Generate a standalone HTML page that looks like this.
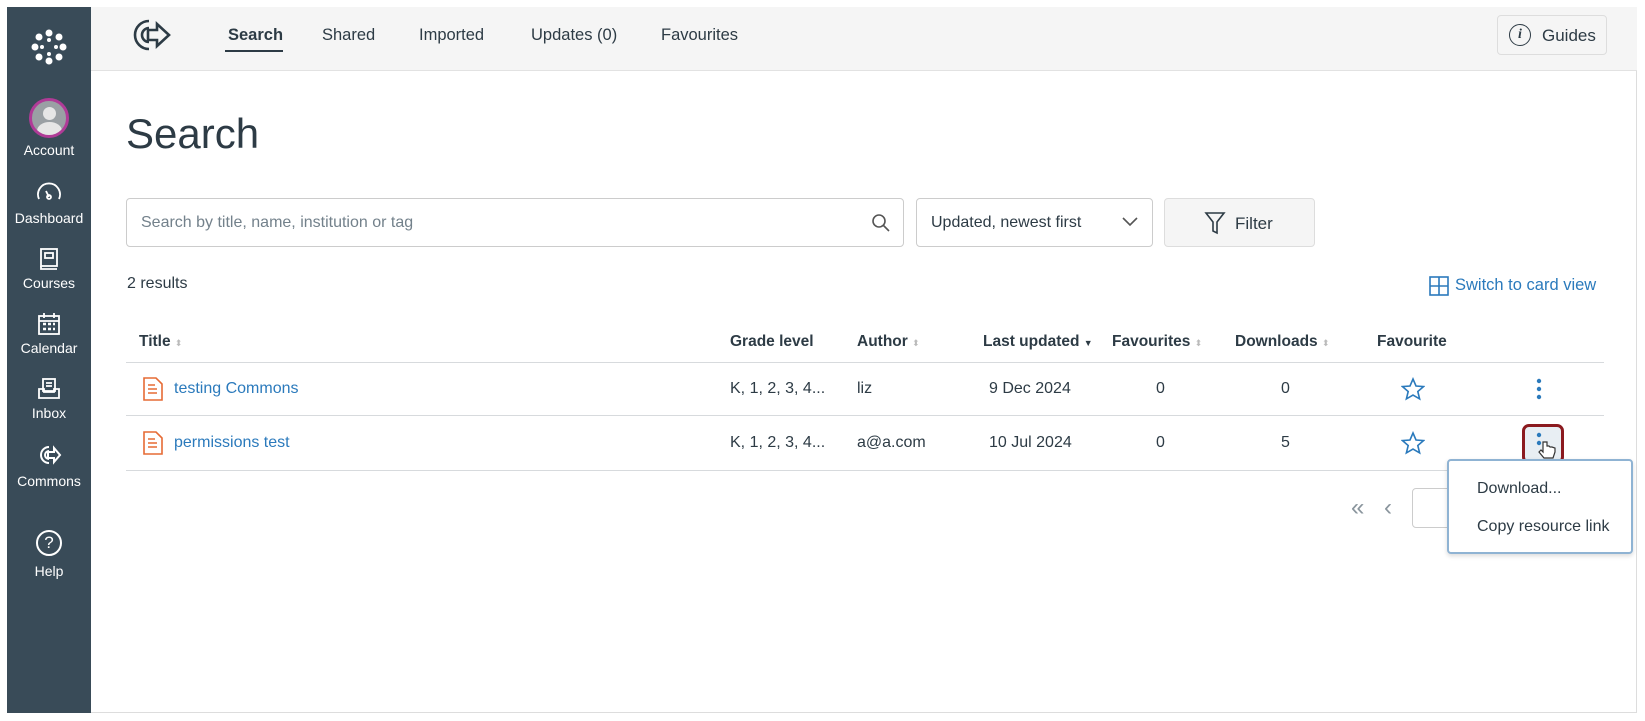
<!DOCTYPE html>
<html><head><meta charset="utf-8"><style>
*{box-sizing:border-box;margin:0;padding:0}
body{width:1645px;height:721px;background:#fff;font-family:"Liberation Sans",sans-serif;position:relative;overflow:hidden;color:#2d3b45}
.frame{position:absolute;left:7px;top:7px;width:1630px;height:706px;border:1px solid #ddd;background:#fff;overflow:hidden}
.side{position:absolute;left:7px;top:7px;width:84px;height:706px;background:#394b58}
.si{position:absolute;left:0;width:84px;text-align:center;color:#fff;font-size:14px}
.top{position:absolute;left:91px;top:7px;width:1546px;height:64px;background:#f5f5f5;border-bottom:1px solid #e2e2e2}
.tab{position:absolute;top:19px;font-size:16.5px;color:#2d3b45}
.abs{position:absolute}
.hd{position:absolute;top:333px;font-size:15.5px;font-weight:bold;color:#2d3b45}
.cell{position:absolute;font-size:16px;color:#2d3b45}
.line{position:absolute;left:126px;width:1478px;height:1px;background:#d7dadd}
.link{color:#2b7abc}
.sort{color:#bbb;font-size:9px;font-weight:normal}
</style></head><body>
<div class="frame"></div>
<div class="side">
 <svg class="abs" style="left:22px;top:20px" width="40" height="40" viewBox="0 0 40 40" fill="#fff"><circle cx="20" cy="6" r="3.5"/><circle cx="20" cy="34" r="3.5"/><circle cx="6" cy="20" r="3.5"/><circle cx="34" cy="20" r="3.5"/><circle cx="10" cy="10" r="3.5"/><circle cx="30" cy="10" r="3.5"/><circle cx="10" cy="30" r="3.5"/><circle cx="30" cy="30" r="3.5"/><circle cx="20" cy="13" r="2"/><circle cx="20" cy="27" r="2"/><circle cx="13" cy="20" r="2"/><circle cx="27" cy="20" r="2"/></svg>
 <div class="abs" style="left:22px;top:91px;width:40px;height:40px;border-radius:50%;border:3px solid #b03b97;background:#9aa0a4;overflow:hidden"><div style="position:absolute;left:11px;top:6px;width:13px;height:13px;border-radius:50%;background:#e6e6e6"></div><div style="position:absolute;left:5px;top:21px;width:25px;height:18px;border-radius:50% 50% 0 0;background:#e6e6e6"></div></div>
 <div class="si" style="top:135px">Account</div>
 <svg class="abs" style="left:29px;top:175px" width="26" height="20" viewBox="0 0 26 20" fill="none" stroke="#fff" stroke-width="1.8"><path d="M3 17A11 11 0 1 1 23 17"/><path d="M13 15l-3-6"/><circle cx="13" cy="15" r="2"/></svg>
 <div class="si" style="top:203px">Dashboard</div>
 <svg class="abs" style="left:31px;top:240px" width="22" height="24" viewBox="0 0 22 24" fill="none" stroke="#fff" stroke-width="1.8"><rect x="3" y="2" width="16" height="17"/><rect x="7" y="6" width="8" height="5"/><path d="M3 19v3h16"/></svg>
 <div class="si" style="top:268px">Courses</div>
 <svg class="abs" style="left:30px;top:305px" width="24" height="24" viewBox="0 0 24 24" fill="none" stroke="#fff" stroke-width="1.8"><rect x="2" y="4" width="20" height="18"/><path d="M2 9h20M7 1v5M17 1v5"/><path d="M6 12h3M11 12h3M16 12h2M6 17h3M11 17h3M16 17h2" stroke-width="2.5"/></svg>
 <div class="si" style="top:333px">Calendar</div>
 <svg class="abs" style="left:30px;top:370px" width="24" height="24" viewBox="0 0 24 24" fill="none" stroke="#fff" stroke-width="1.8"><rect x="6" y="2" width="12" height="12"/><path d="M9 6h6M9 9h6"/><path d="M2 12h5v3h10v-3h5v9H2z"/></svg>
 <div class="si" style="top:398px">Inbox</div>
 <svg class="abs" style="left:29px;top:437px" width="26" height="22" viewBox="0 0 26 22" fill="none" stroke="#fff" stroke-width="2"><path d="M13 3A8 8 0 1 0 13 19"/><path d="M13 7A4 4 0 1 0 13 15"/><path d="M12 8h6V4l6 7-6 7v-4h-6z"/></svg>
 <div class="si" style="top:466px">Commons</div>
 <div class="abs" style="left:29px;top:523px;width:26px;height:26px;border:2px solid #fff;border-radius:50%;color:#fff;font-size:17px;text-align:center;line-height:22px">?</div>
 <div class="si" style="top:556px">Help</div>
</div>
<div class="top">
 <svg class="abs" style="left:38px;top:10px" width="44" height="36" viewBox="0 0 44 36" fill="none" stroke="#2d3b45" stroke-width="2.6"><path d="M20 4A14 14 0 1 0 20 32"/><path d="M20 11A7 7 0 1 0 20 25"/><path d="M19 13h9V7l12 11-12 11v-6h-9z"/></svg>
 <div class="tab" style="left:137px;font-weight:bold">Search</div>
 <div class="abs" style="left:134px;top:43px;width:58px;height:2px;background:#2d3b45"></div>
 <div class="tab" style="left:231px">Shared</div>
 <div class="tab" style="left:328px">Imported</div>
 <div class="tab" style="left:440px">Updates (0)</div>
 <div class="tab" style="left:570px">Favourites</div>
 <div class="abs" style="left:1406px;top:8px;width:110px;height:40px;border:1px solid #ddd;border-radius:4px;background:#f5f5f5;font-size:17px;padding:10px 0 0 44px">Guides</div>
 <div class="abs" style="left:1418px;top:17px;width:22px;height:22px;border:1.8px solid #2d3b45;border-radius:50%;font:italic bold 14px 'Liberation Serif',serif;text-align:center;line-height:19px">i</div>
</div>
<div class="abs" style="left:126px;top:110px;font-size:42px;color:#2d3b45">Search</div>
<div class="abs" style="left:126px;top:198px;width:778px;height:49px;border:1px solid #ccc;border-radius:4px;font-size:16px;color:#73818b;padding:15px 14px">Search by title, name, institution or tag</div>
<svg class="abs" style="left:871px;top:213px" width="20" height="20" viewBox="0 0 20 20" fill="none" stroke="#555" stroke-width="1.6"><circle cx="8" cy="8" r="6"/><path d="M12.5 12.5L18 18"/></svg>
<div class="abs" style="left:916px;top:198px;width:237px;height:49px;border:1px solid #ccc;border-radius:4px;font-size:16px;color:#2d3b45;padding:15px 14px">Updated, newest first</div>
<svg class="abs" style="left:1121px;top:216px" width="18" height="12" viewBox="0 0 18 12" fill="none" stroke="#555" stroke-width="1.6"><path d="M2 2l7 7 7-7"/></svg>
<div class="abs" style="left:1164px;top:198px;width:151px;height:49px;border:1px solid #ddd;border-radius:4px;background:#f5f5f5;font-size:17px;padding:15px 0 0 70px">Filter</div>
<svg class="abs" style="left:1204px;top:211px" width="22" height="24" viewBox="0 0 22 24" fill="none" stroke="#2d3b45" stroke-width="1.6"><path d="M2 2h18l-7 9v11l-4-2v-9z"/></svg>
<div class="abs" style="left:127px;top:275px;font-size:16px">2 results</div>
<svg class="abs" style="left:1429px;top:276px" width="20" height="20" viewBox="0 0 20 20" fill="none" stroke="#2b7abc" stroke-width="1.6"><rect x="1" y="1" width="18" height="18"/><path d="M10 1v18M1 10h18"/></svg>
<div class="abs link" style="left:1455px;top:276px;font-size:16.5px">Switch to card view</div>
<div class="hd" style="left:139px">Title <span class="sort">⬍</span></div>
<div class="hd" style="left:730px">Grade level</div>
<div class="hd" style="left:857px">Author <span class="sort">⬍</span></div>
<div class="hd" style="left:983px">Last updated <span style="font-size:9px">▼</span></div>
<div class="hd" style="left:1112px">Favourites <span class="sort">⬍</span></div>
<div class="hd" style="left:1235px">Downloads <span class="sort">⬍</span></div>
<div class="hd" style="left:1377px">Favourite</div>
<div class="line" style="top:362px"></div>
<div class="line" style="top:415px"></div>
<div class="line" style="top:470px"></div>
<svg class="abs" style="left:142px;top:377px" width="22" height="24" viewBox="0 0 22 24" fill="none" stroke="#e66b35" stroke-width="1.6"><path d="M2 1h12l6 6v16H2z"/><path d="M6 8h7M6 12h9M6 16h9"/></svg>
<svg class="abs" style="left:142px;top:431px" width="22" height="24" viewBox="0 0 22 24" fill="none" stroke="#e66b35" stroke-width="1.6"><path d="M2 1h12l6 6v16H2z"/><path d="M6 8h7M6 12h9M6 16h9"/></svg>
<div class="cell link" style="left:174px;top:380px">testing Commons</div>
<div class="cell link" style="left:174px;top:434px">permissions test</div>
<div class="cell" style="left:730px;top:380px">K, 1, 2, 3, 4...</div>
<div class="cell" style="left:730px;top:434px">K, 1, 2, 3, 4...</div>
<div class="cell" style="left:857px;top:380px">liz</div>
<div class="cell" style="left:857px;top:434px">a@a.com</div>
<div class="cell" style="left:989px;top:380px">9 Dec 2024</div>
<div class="cell" style="left:989px;top:434px">10 Jul 2024</div>
<div class="cell" style="left:1156px;top:380px">0</div>
<div class="cell" style="left:1156px;top:434px">0</div>
<div class="cell" style="left:1281px;top:380px">0</div>
<div class="cell" style="left:1281px;top:434px">5</div>
<svg class="abs" style="left:1401px;top:377px" width="24" height="24" viewBox="0 0 24 24" fill="none" stroke="#2b7abc" stroke-width="1.6"><path d="M12 2l3 7 7.5.6-5.7 4.9 1.8 7.4L12 18l-6.6 3.9 1.8-7.4L1.5 9.6 9 9z"/></svg>
<svg class="abs" style="left:1401px;top:431px" width="24" height="24" viewBox="0 0 24 24" fill="none" stroke="#2b7abc" stroke-width="1.6"><path d="M12 2l3 7 7.5.6-5.7 4.9 1.8 7.4L12 18l-6.6 3.9 1.8-7.4L1.5 9.6 9 9z"/></svg>
<svg class="abs" style="left:1536px;top:378px" width="6" height="22"><circle cx="3" cy="3" r="2.2" fill="#2b7abc"/><circle cx="3" cy="11" r="2.2" fill="#2b7abc"/><circle cx="3" cy="19" r="2.2" fill="#2b7abc"/></svg>
<div class="abs" style="left:1522px;top:424px;width:42px;height:40px;border:3px solid #8b1a1f;border-radius:7px;background:#e8eef3"></div>
<svg class="abs" style="left:1536px;top:432px" width="6" height="22"><circle cx="3" cy="3" r="2.2" fill="#2b7abc"/><circle cx="3" cy="11" r="2.2" fill="#2b7abc"/></svg>
<svg class="abs" style="left:1538px;top:440px" width="18" height="20" viewBox="0 0 18 20" fill="#fff" stroke="#333" stroke-width="1.2"><path d="M5 2v10l-2-2-2 2 5 6h9l2-6v-4l-3-1-2 0-1-1-2 0V2z"/></svg>
<div class="abs" style="left:1351px;top:494px;font-size:24px;color:#8a959d">«</div>
<div class="abs" style="left:1384px;top:494px;font-size:24px;color:#8a959d">‹</div>
<div class="abs" style="left:1412px;top:488px;width:60px;height:40px;border:1px solid #ccc;border-radius:4px"></div>
<div class="abs" style="left:1447px;top:459px;width:186px;height:95px;border:2px solid #8fb3d3;border-radius:4px;background:#fff;box-shadow:0 2px 5px rgba(0,0,0,.15)"></div>
<div class="abs" style="left:1477px;top:480px;font-size:16px">Download...</div>
<div class="abs" style="left:1477px;top:518px;font-size:16px">Copy resource link</div>
</body></html>
